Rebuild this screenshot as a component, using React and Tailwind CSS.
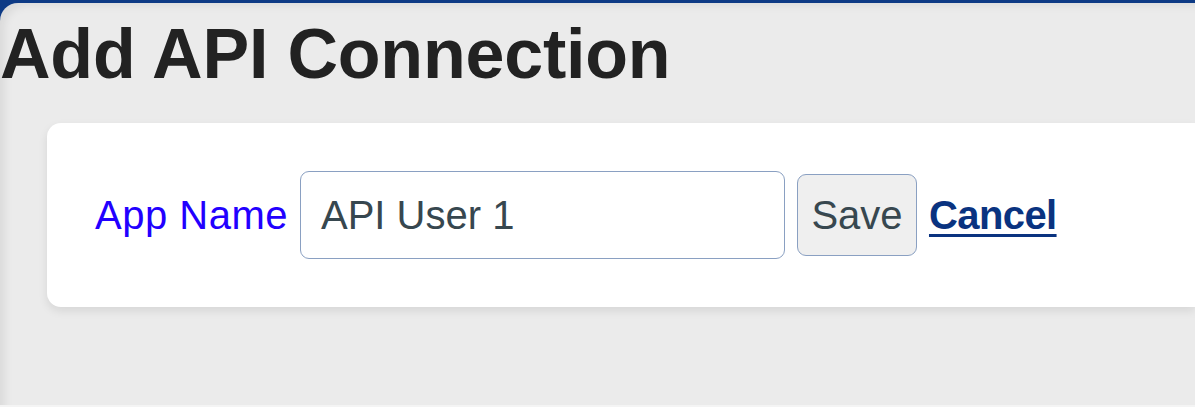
export default function App() {
  return (
    <div className="w-[1195px] h-[407px] bg-[#0d3a85] overflow-hidden flex flex-col" style={{ fontFamily: '"Liberation Sans", Arial, sans-serif' }}>
      <div className="mt-[3px] flex-1 bg-[#ebebeb] rounded-tl-[18px] shadow-[inset_8px_6px_10px_-4px_rgba(0,0,0,0.08)] flex flex-col border-b-2 border-[#f4f4f4]">
        <h1 className="mt-[16px] ml-[0px] text-[70px] leading-[70px] font-bold text-[#222222] tracking-[-0.2px] whitespace-nowrap">
          Add API Connection
        </h1>
        <div className="mt-[34px] ml-[47px] h-[184px] bg-white rounded-l-[14px] shadow-[0_4px_10px_rgba(0,0,0,0.09)] flex items-center pl-[48px] gap-[12px]">
          <label className="text-[40px] leading-none text-[#2200ff] whitespace-nowrap tracking-[0.5px]">App Name</label>
          <div className="w-[485px] h-[88px] border border-[#8aa0c2] rounded-[9px] bg-white flex items-center pl-[20px] text-[40px] text-[#37474f] leading-none">
            API User 1
          </div>
          <button className="w-[120px] h-[82px] border border-[#8aa0c2] rounded-[9px] bg-[#efefef] text-[40px] text-[#37474f] leading-none flex items-center justify-center">
            Save
          </button>
          <a className="text-[40px] font-bold text-[#0a3380] underline decoration-[3px] underline-offset-[5px] leading-none tracking-[-0.6px]">Cancel</a>
        </div>
      </div>
    </div>
  );
}
